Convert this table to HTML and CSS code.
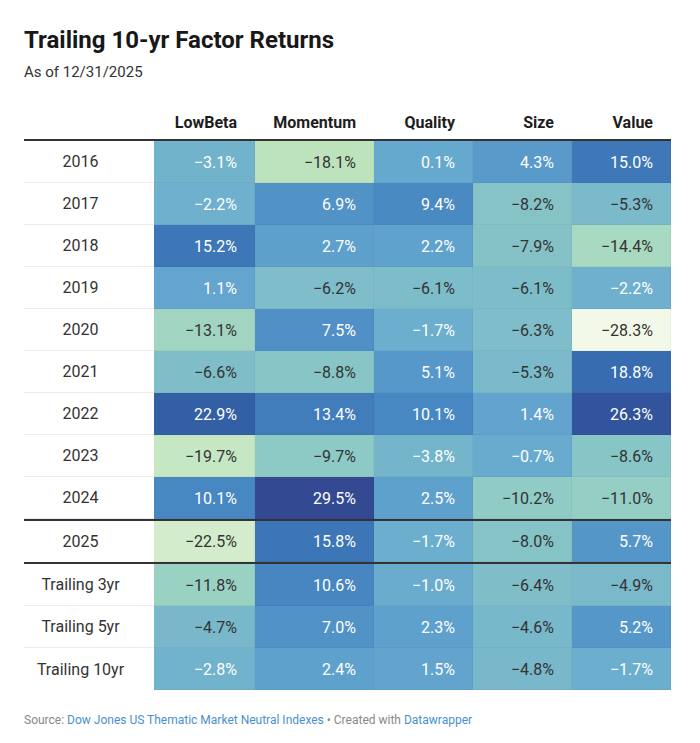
FILE: index.html
```html
<!DOCTYPE html>
<html lang="en">
<head>
<meta charset="utf-8">
<title>Trailing 10-yr Factor Returns</title>
<link rel="stylesheet" href="styles.css">
</head>
<body>
<div class="chart">
  <h1 class="title">Trailing 10-yr Factor Returns</h1>
  <p class="subtitle">As of 12/31/2025</p>
  <div class="table">
    <div class="row head">
      <div class="lbl"></div>
      <div class="cell">LowBeta</div>
      <div class="cell">Momentum</div>
      <div class="cell">Quality</div>
      <div class="cell">Size</div>
      <div class="cell">Value</div>
    </div>
    <div class="row"><div class="lbl">2016</div><div class="cell" data-v="-3.1"></div><div class="cell" data-v="-18.1"></div><div class="cell" data-v="0.1"></div><div class="cell" data-v="4.3"></div><div class="cell" data-v="15.0"></div></div>
    <div class="row"><div class="lbl">2017</div><div class="cell" data-v="-2.2"></div><div class="cell" data-v="6.9"></div><div class="cell" data-v="9.4"></div><div class="cell" data-v="-8.2"></div><div class="cell" data-v="-5.3"></div></div>
    <div class="row"><div class="lbl">2018</div><div class="cell" data-v="15.2"></div><div class="cell" data-v="2.7"></div><div class="cell" data-v="2.2"></div><div class="cell" data-v="-7.9"></div><div class="cell" data-v="-14.4"></div></div>
    <div class="row"><div class="lbl">2019</div><div class="cell" data-v="1.1"></div><div class="cell" data-v="-6.2"></div><div class="cell" data-v="-6.1"></div><div class="cell" data-v="-6.1"></div><div class="cell" data-v="-2.2"></div></div>
    <div class="row"><div class="lbl">2020</div><div class="cell" data-v="-13.1"></div><div class="cell" data-v="7.5"></div><div class="cell" data-v="-1.7"></div><div class="cell" data-v="-6.3"></div><div class="cell" data-v="-28.3"></div></div>
    <div class="row"><div class="lbl">2021</div><div class="cell" data-v="-6.6"></div><div class="cell" data-v="-8.8"></div><div class="cell" data-v="5.1"></div><div class="cell" data-v="-5.3"></div><div class="cell" data-v="18.8"></div></div>
    <div class="row"><div class="lbl">2022</div><div class="cell" data-v="22.9"></div><div class="cell" data-v="13.4"></div><div class="cell" data-v="10.1"></div><div class="cell" data-v="1.4"></div><div class="cell" data-v="26.3"></div></div>
    <div class="row"><div class="lbl">2023</div><div class="cell" data-v="-19.7"></div><div class="cell" data-v="-9.7"></div><div class="cell" data-v="-3.8"></div><div class="cell" data-v="-0.7"></div><div class="cell" data-v="-8.6"></div></div>
    <div class="row"><div class="lbl">2024</div><div class="cell" data-v="10.1"></div><div class="cell" data-v="29.5"></div><div class="cell" data-v="2.5"></div><div class="cell" data-v="-10.2"></div><div class="cell" data-v="-11.0"></div></div>
    <div class="rule"></div>
    <div class="row single"><div class="lbl">2025</div><div class="cell" data-v="-22.5"></div><div class="cell" data-v="15.8"></div><div class="cell" data-v="-1.7"></div><div class="cell" data-v="-8.0"></div><div class="cell" data-v="5.7"></div></div>
    <div class="rule"></div>
    <div class="row"><div class="lbl">Trailing 3yr</div><div class="cell" data-v="-11.8"></div><div class="cell" data-v="10.6"></div><div class="cell" data-v="-1.0"></div><div class="cell" data-v="-6.4"></div><div class="cell" data-v="-4.9"></div></div>
    <div class="row"><div class="lbl">Trailing 5yr</div><div class="cell" data-v="-4.7"></div><div class="cell" data-v="7.0"></div><div class="cell" data-v="2.3"></div><div class="cell" data-v="-4.6"></div><div class="cell" data-v="5.2"></div></div>
    <div class="row end"><div class="lbl">Trailing 10yr</div><div class="cell" data-v="-2.8"></div><div class="cell" data-v="2.4"></div><div class="cell" data-v="1.5"></div><div class="cell" data-v="-4.8"></div><div class="cell" data-v="-1.7"></div></div>
  </div>
  <p class="footer">Source: <a href="#">Dow Jones US Thematic Market Neutral Indexes</a> • Created with <a href="#">Datawrapper</a></p>
</div>
<script src="script.js"></script>
</body>
</html>
```
FILE: styles.css
```css
* { box-sizing: border-box; }
html, body { margin: 0; padding: 0; background: #fff; }
body { font-family: Roboto, "Liberation Sans", sans-serif; color: #333; }
.chart { padding: 24px 29px 0 24px; }
.title { margin: 0; font-size: 24px; font-weight: 700; line-height: 32px; color: #181818; }
.subtitle { margin: 6px 0 0; font-size: 15px; line-height: 20px; color: #333; }
.table { margin-top: 18px; width: 647px; }
.row { display: grid; grid-template-columns: 130px 101px 119px 99px 99px 99px; height: 42px; }
.row.head { height: 41px; border-bottom: 2px solid #333; align-items: end; padding-bottom: 7px; }
.row.head .cell { font-weight: 700; color: #1d1d1d; }
.row.head .lbl { border-bottom: none; }
.row.single { height: 41px; }
.row.single .lbl, .row.end .lbl { border-bottom: none; }
.rule { height: 2px; background: #333; width: 647px; }
.lbl { display: flex; align-items: center; justify-content: center; padding-right: 17px; font-size: 16px; color: #333; border-bottom: 1px solid #ececec; }
.cell { display: flex; align-items: center; justify-content: flex-end; padding-right: 18px; font-size: 16px; color: #333; }
.row:not(.head) .cell { box-shadow: inset -1px -1px 0 rgba(0,0,0,0.035); }
.cell.dark { color: #fff; }
.footer { margin: 22px 0 0; font-size: 12px; color: #888; line-height: 16px; }
.footer a { color: #4a90d0; text-decoration: none; }
```
FILE: script.js
```js
(function () {
  var stops = [
    [-28.3, [242, 249, 232]],
    [-22.5, [211, 237, 204]],
    [-18.0, [189, 227, 189]],
    [-13.0, [160, 213, 194]],
    [-9.0, [137, 198, 198]],
    [-5.0, [121, 185, 202]],
    [0.0, [102, 169, 207]],
    [5.0, [87, 152, 202]],
    [10.0, [72, 136, 194]],
    [15.0, [62, 120, 184]],
    [20.0, [53, 105, 173]],
    [25.0, [49, 88, 160]],
    [29.5, [51, 73, 145]]
  ];
  function color(v) {
    if (v <= stops[0][0]) return stops[0][1];
    for (var i = 1; i < stops.length; i++) {
      if (v <= stops[i][0]) {
        var a = stops[i - 1], b = stops[i];
        var t = (v - a[0]) / (b[0] - a[0]);
        return a[1].map(function (c, k) { return Math.round(c + (b[1][k] - c) * t); });
      }
    }
    return stops[stops.length - 1][1];
  }
  var cells = document.querySelectorAll('.cell[data-v]');
  cells.forEach(function (el) {
    var v = parseFloat(el.getAttribute('data-v'));
    var c = color(v);
    el.style.backgroundColor = 'rgb(' + c.join(',') + ')';
    if (v > -4) el.classList.add('dark');
    el.textContent = (v < 0 ? '\u2212' : '') + Math.abs(v).toFixed(1) + '%';
  });
})();
```
